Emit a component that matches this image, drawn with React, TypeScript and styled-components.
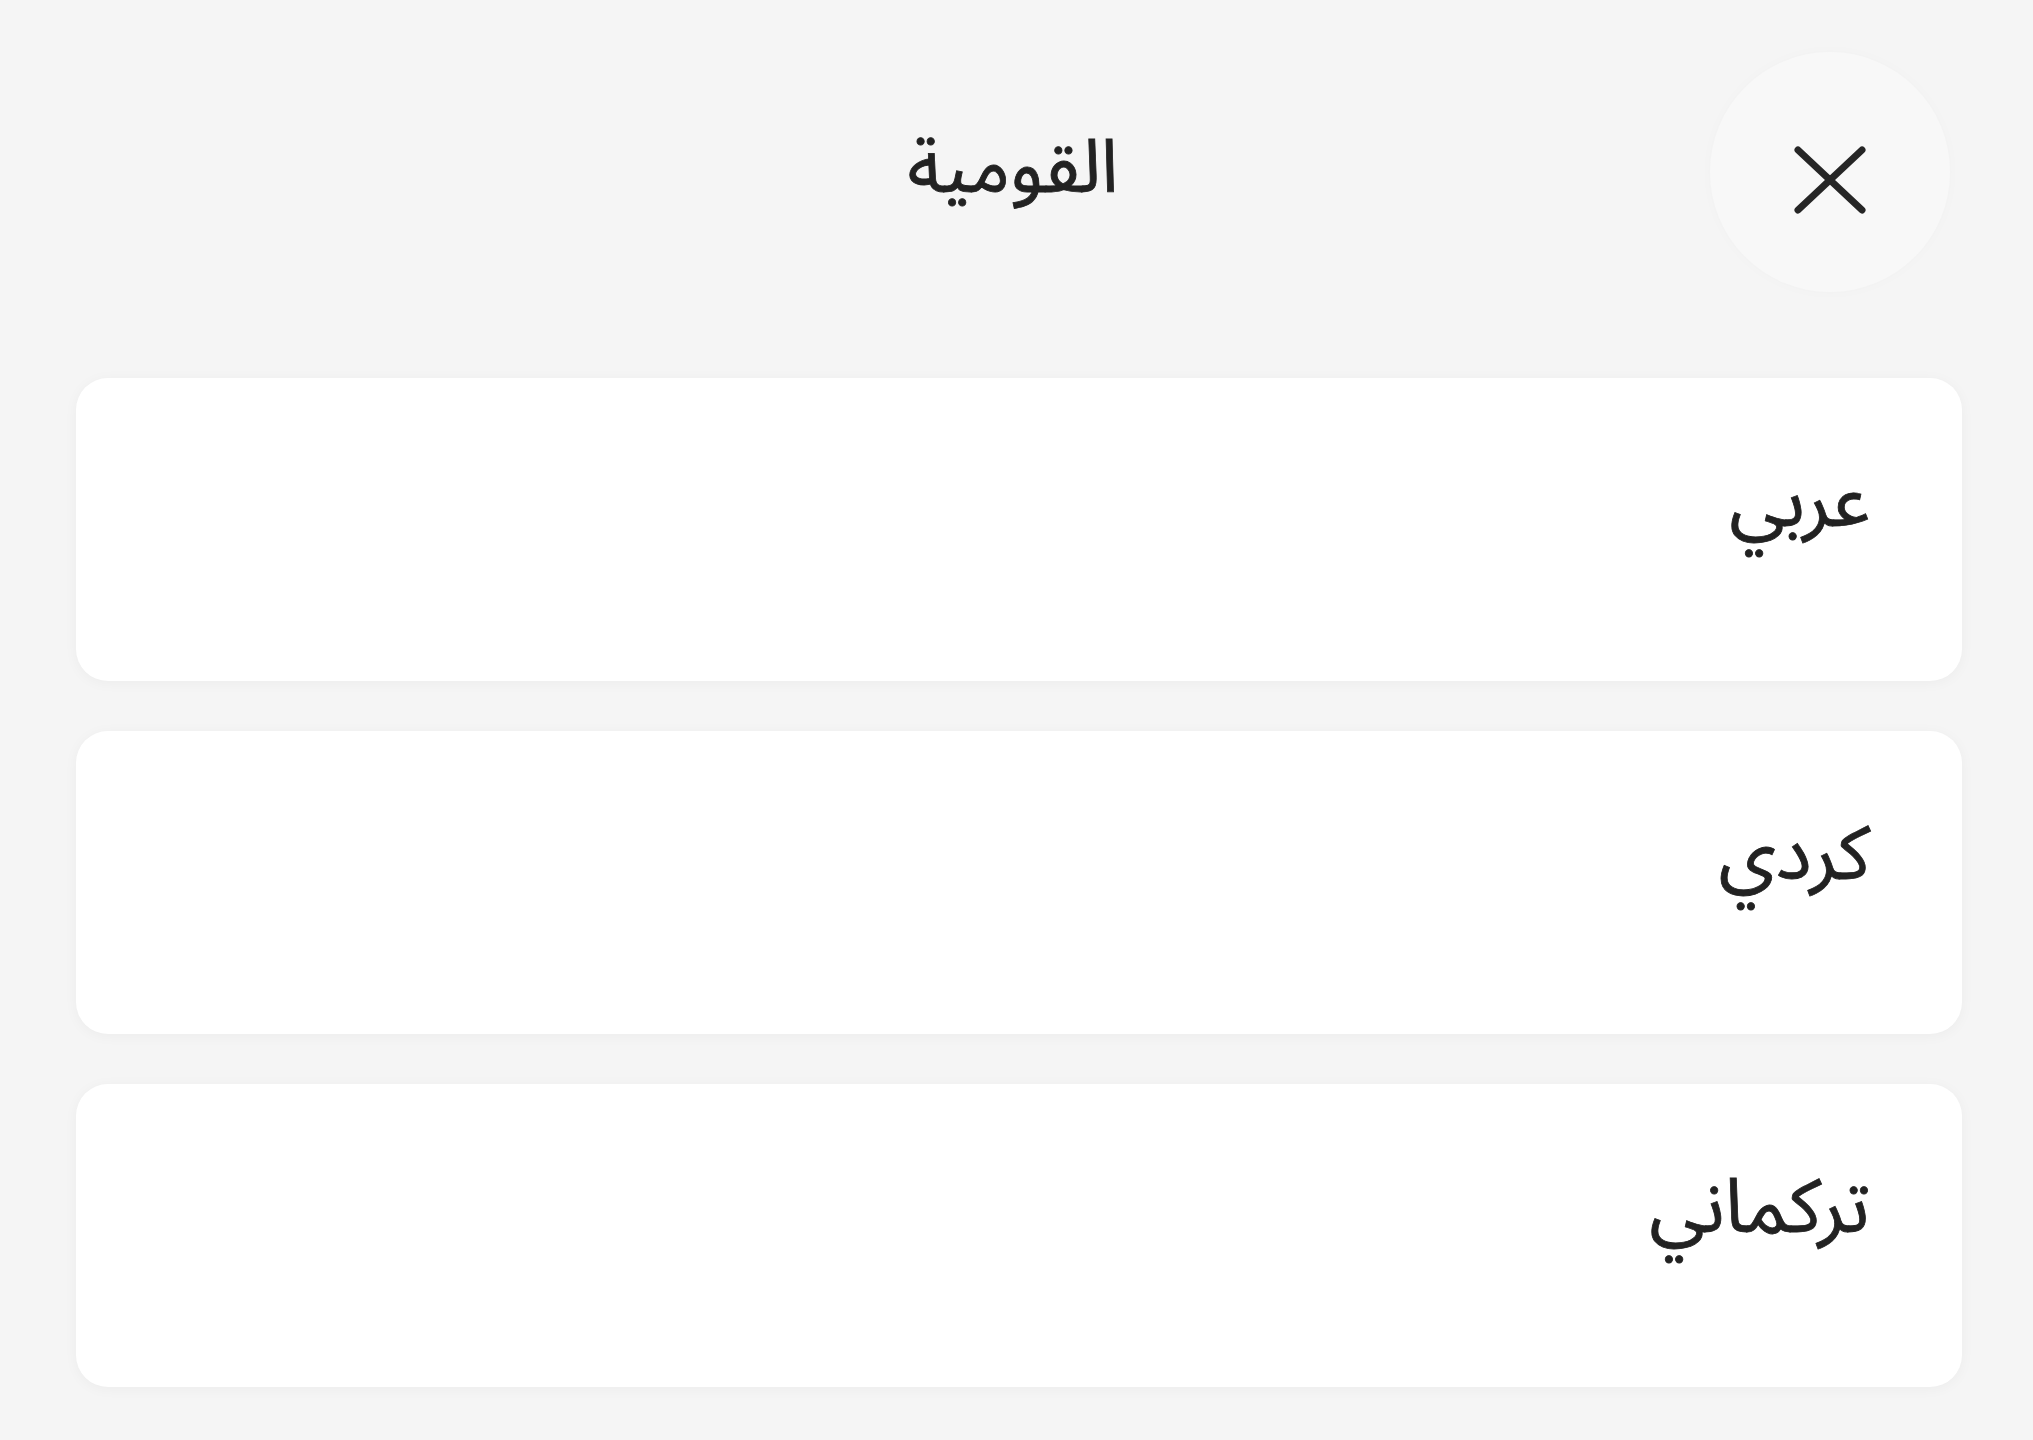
import React from 'react';
import styled, { createGlobalStyle } from 'styled-components';

const GlobalStyle = createGlobalStyle`
  html, body {
    margin: 0;
    padding: 0;
    background-color: #f5f5f5;
  }
  * {
    box-sizing: border-box;
  }
`;

const Page = styled.div`
  direction: rtl;
  min-height: 1440px;
  background-color: #f5f5f5;
  padding: 50px 71px 0 76px;
  font-family: "Noto Sans Arabic", "DejaVu Sans", sans-serif;
  color: #222222;
`;

const Header = styled.header`
  display: grid;
  grid-template-columns: 1fr auto 1fr;
  align-items: center;
  height: 243px;
  margin-right: 12px;
`;

const CloseButton = styled.button`
  justify-self: start;
  width: 240px;
  height: 240px;
  border-radius: 50%;
  border: none;
  background-color: #f8f8f8;
  box-shadow: 0 0 14px rgba(0, 0, 0, 0.02);
  display: flex;
  align-items: center;
  justify-content: center;
  padding: 0;
  padding-top: 16px;
  cursor: pointer;
`;

const Title = styled.h1`
  margin: 0 0 6px 0;
  font-size: 74px;
  font-weight: 400;
  -webkit-text-stroke: 0.8px #222222;
  text-align: center;
  color: #222222;
`;

const List = styled.ul`
  list-style: none;
  margin: 85px 0 0 0;
  padding: 0;
  display: flex;
  flex-direction: column;
  gap: 50px;
`;

const Option = styled.li`
  height: 303px;
  background-color: #ffffff;
  border-radius: 32px;
  box-shadow: 0 2px 14px rgba(0, 0, 0, 0.04);
  display: flex;
  align-items: center;
  padding: 0 92px 56px 92px;
  font-size: 75px;
  -webkit-text-stroke: 0.8px #222222;
  color: #222222;
  cursor: pointer;
`;

const options = ['عربي', 'كردي', 'تركماني'];

const App: React.FC = () => {
  return (
    <>
      <GlobalStyle />
      <Page>
        <Header>
          <CloseButton aria-label="إغلاق">
            <svg width="72" height="68" viewBox="0 0 72 68" fill="none">
              <path d="M4 4 L68 64 M68 4 L4 64" stroke="#262626" strokeWidth="7" strokeLinecap="round" />
            </svg>
          </CloseButton>
          <Title>القومية</Title>
          <div />
        </Header>
        <List>
          {options.map((label) => (
            <Option key={label}>{label}</Option>
          ))}
        </List>
      </Page>
    </>
  );
};

export default App;
